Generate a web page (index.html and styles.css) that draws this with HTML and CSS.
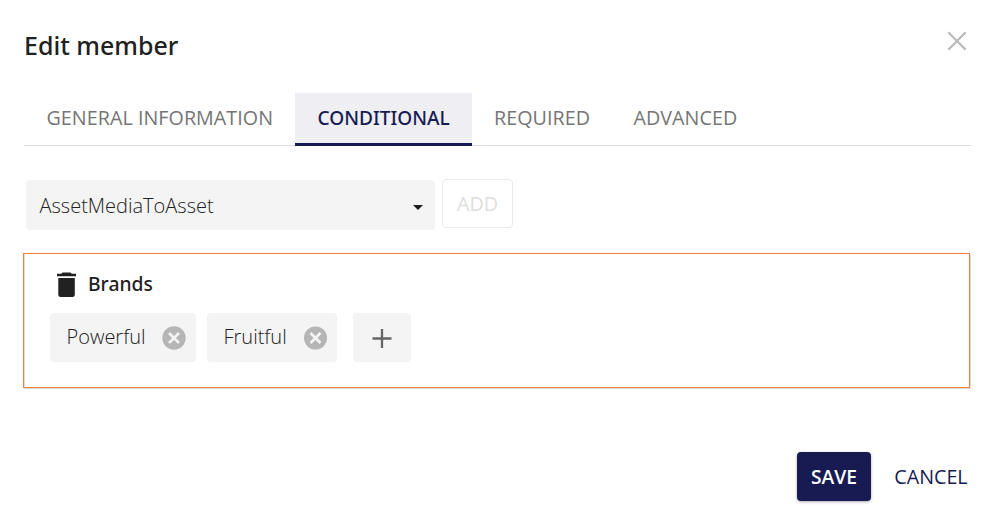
FILE: index.html
```html
<!DOCTYPE html>
<html lang="en">
<head>
<meta charset="utf-8">
<title>Edit member</title>
<link rel="stylesheet" href="styles.css">
</head>
<body>
<main class="dialog">
  <header class="header">
    <h1 class="title">Edit member</h1>
    <button class="close" aria-label="Close"><svg width="20" height="20" viewBox="0 0 20 20"><path d="M1.300 1.300l17.400 17.400M18.700 1.300l-17.400 17.400" stroke="#bababa" stroke-width="2.200" fill="none"/></svg></button>
  </header>
  <nav class="tabs">
    <a class="tab tab-general">GENERAL INFORMATION</a>
    <a class="tab tab-active">CONDITIONAL</a>
    <a class="tab tab-required">REQUIRED</a>
    <a class="tab tab-advanced">ADVANCED</a>
  </nav>
  <div class="picker">
    <div class="select"><span class="select-text">AssetMediaToAsset</span><svg class="caret" width="10" height="5" viewBox="0 0 10 5"><path d="M0 0h10L5 5z" fill="#1d1d1d"/></svg></div>
    <button class="add">ADD</button>
  </div>
  <section class="panel">
    <div class="group">
      <svg width="20" height="26" viewBox="0 0 20 26"><path d="M1.300 6h16.500v16.500a2.500 2.500 0 0 1-2.500 2.500H3.800a2.500 2.500 0 0 1-2.500-2.500zM5.500 .4h8l1.200 1.300H19v2.500H0V1.700h4.300z" fill="#212121"/></svg>
      <h2 class="group-name">Brands</h2>
    </div>
    <div class="chips">
      <div class="chip chip-first"><span class="chip-text">Powerful</span><svg width="24" height="24" viewBox="0 0 24 24"><circle cx="12" cy="12" r="11.700" fill="#b5b5b5"/><path d="M7 7l10 10M17 7l-10 10" stroke="#f4f4f4" stroke-width="2.600"/></svg></div>
      <div class="chip chip-second"><span class="chip-text">Fruitful</span><svg width="24" height="24" viewBox="0 0 24 24"><circle cx="12.500" cy="12" r="11.500" fill="#b5b5b5"/><path d="M7.500 7l10 10M17.500 7l-10 10" stroke="#f4f4f4" stroke-width="2.600"/></svg></div>
      <button class="plus" aria-label="Add value"><svg width="20" height="20" viewBox="0 0 20 20"><path d="M0.500 10.500h19M10 1v19" stroke="#666" stroke-width="2.300"/></svg></button>
    </div>
  </section>
  <footer class="footer">
    <button class="save">SAVE</button>
    <button class="cancel">CANCEL</button>
  </footer>
</main>
</body>
</html>
```
FILE: styles.css
```css
* { box-sizing: border-box; }
body { margin: 0; background: #fff; font-family: "Open Sans", sans-serif; color: #212121; }
button { font: inherit; border: 0; padding: 0; background: none; }
svg { display: block; flex: none; }
.dialog { width: 994px; height: 517px; overflow: hidden; padding: 28px 23px 0 24px; }
.header { display: flex; justify-content: space-between; height: 65px; }
.title { margin: 0; font-family: "Noto Sans", sans-serif; font-size: 25px; line-height: 34px; font-weight: 500; }
.close { width: 20px; height: 20px; margin: 3px 4px 0 0; }
.tabs { display: flex; height: 53px; border-bottom: 1px solid #dcdcdc; font-size: 19.700px; line-height: 50px; font-weight: 400; letter-spacing: 0.050px; color: #757575; white-space: nowrap; }
.tab { height: 53px; padding-left: 22.500px; }
.tab-general { width: 271px; }
.tab-active { width: 177px; background: #eeeef3; color: #171b52; border-bottom: 3px solid #171b52; font-family: "Noto Sans", sans-serif; font-size: 19.100px; letter-spacing: 0; font-weight: 500; }
.tab-required { width: 139px; padding-left: 22px; }
.picker { display: flex; gap: 7px; padding: 33px 0 0 2px; height: 107px; }
.select { display: flex; align-items: center; justify-content: space-between; width: 409px; height: 50px; margin-top: 1px; padding: 0 12px 0 13.500px; background: #f4f4f4; border-radius: 4px; font-size: 20px; font-weight: 300; }
.caret { margin-top: 4px; }
.add { width: 71px; height: 49px; border: 1px solid #ebebeb; border-radius: 4px; color: #dedede; font-size: 19.700px; }
.panel { width: 947px; height: 135px; margin-left: -1px; border: 1px solid #f58033; box-shadow: 1px 1px 0 #dcdcdc, inset 1px 0 0 #dcdcdc; padding: 18px 26px; }
.group { display: flex; gap: 11px; padding-left: 7px; height: 41px; }
.group-name { margin: 0; font-family: "Noto Sans", sans-serif; font-size: 19.300px; line-height: 24px; font-weight: 500; }
.chips { display: flex; }
.chip { display: flex; align-items: center; justify-content: space-between; height: 49px; padding: 0 10px 0 16.500px; background: #f4f4f4; border-radius: 4px; font-size: 20px; font-weight: 300; }
.chip-text { padding-bottom: 2px; }
.chip-first { width: 146px; margin-right: 11px; }
.chip-second { width: 130px; margin-right: 16px; }
.plus { display: flex; align-items: center; justify-content: center; width: 58px; height: 49px; background: #f4f4f4; border-radius: 4px; }
.footer { display: flex; justify-content: flex-end; gap: 23px; padding: 64px 3px 0 0; font-size: 19.700px; }
.save { width: 74px; height: 49px; background: #171b52; color: #fff; font-size: 19.300px; font-weight: 600; border-radius: 4px; box-shadow: 0 1px 3px #0005; }
.cancel { width: 74px; color: #171b52; height: 49px; font-weight: 400; }
```
